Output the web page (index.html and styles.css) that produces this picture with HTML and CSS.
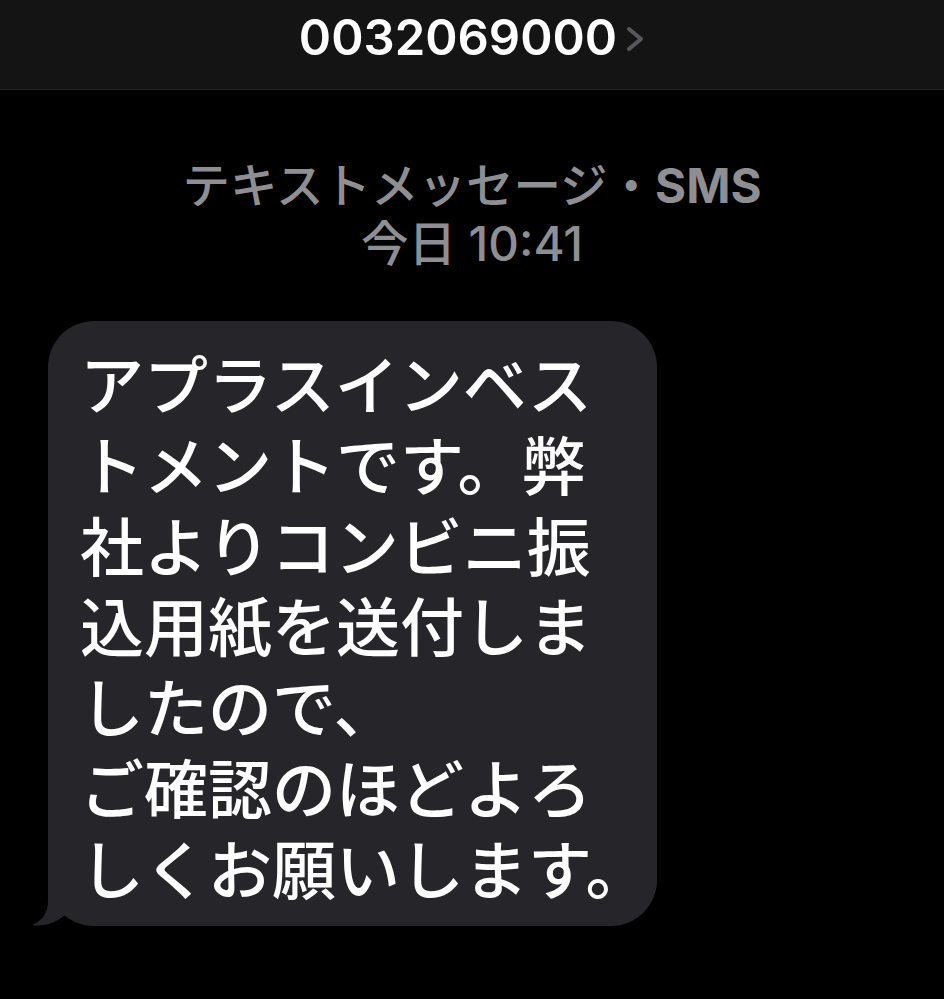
FILE: index.html
```html
<!DOCTYPE html>
<html lang="ja">
<head>
  <meta charset="UTF-8">
  <title>0032069000</title>
  <link rel="stylesheet" href="styles.css">
</head>
<body>

  <!-- header -->
  <div class="top-bar">
    <span class="sender">0032069000</span>
    <svg class="chevron" width="20" height="26" viewBox="0 0 20 26">
      <path d="M4 3 L16 13 L4 23" fill="none" stroke="#58585c" stroke-width="4" stroke-linecap="round" stroke-linejoin="round"/>
    </svg>
  </div>

  <!-- meta -->
  <div class="meta">
    <div>テキストメッセージ・<strong>SMS</strong></div>
    <div>今日 10:41</div>
  </div>

  <!-- message -->
  <div class="thread">
    <div class="bubble">
      アプラスインベス<br>
      トメントです。弊<br>
      社よりコンビニ振<br>
      込用紙を送付しま<br>
      したので、<br>
      ご確認のほどよろ<br>
      しくお願いします。
      <svg class="tail" width="40" height="50" viewBox="0 0 40 50">
        <path d="M20 0 L20 25 C20 37 14 45 4 49 C15 51 28 47 37 39 L40 30 L40 0 Z" fill="#262529"/>
      </svg>
    </div>
  </div>

</body>
</html>
```

FILE: styles.css
```css
body {
  margin: 0;
  background: #000;
  font-family: Inter, "Noto Sans CJK JP", sans-serif;
}

.top-bar {
  height: 89px;
  background: #141414;
  border-bottom: 1px solid #262626;
  display: flex;
  align-items: center;
  justify-content: center;
  gap: 8px;
}

.sender {
  color: #fff;
  font-size: 49px;
  font-weight: 600;
  margin-top: -14px;
}

.chevron {
  margin-top: -12px;
}

.meta {
  margin-top: 67px;
  text-align: center;
  color: #8e8e93;
  font-size: 47.5px;
  font-weight: 500;
  line-height: 58px;
}

.meta strong {
  font-weight: 700;
}

.thread {
  padding: 48px 0 0 48px;
}

.bubble {
  position: relative;
  width: 609px;
  box-sizing: border-box;
  padding: 20px 10px 19px 32px;
  background: #262529;
  border-radius: 46px;
  color: #fff;
  font-family: "Noto Sans CJK JP", sans-serif;
  font-size: 64px;
  font-weight: 500;
  line-height: 80.8px;
  white-space: nowrap;
}

.tail {
  position: absolute;
  left: -20px;
  bottom: 0;
}
```
